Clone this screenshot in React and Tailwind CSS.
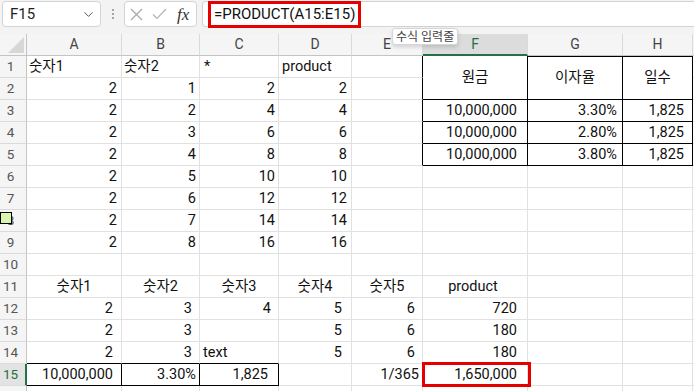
import { ChevronDown } from 'lucide-react'

const COLS = ['A', 'B', 'C', 'D', 'E', 'F', 'G', 'H', '']

const base = 'flex items-center whitespace-nowrap border-r border-b border-[#e1e1e1] text-[14.5px] text-[#111]'

// one entry per visible cell in flow order (merged cells skipped in row 2)
const rows = [
  [
    { t: '숫자1', c: 'pl-[2px]' },
    { t: '숫자2', c: 'pl-[2px]' },
    { t: '*', c: 'pl-[4px]' },
    { t: 'product', c: 'pl-[3px]' },
    { c: 'border-r-black' },
    { t: '원금', c: 'row-span-2 justify-center border-r-black border-b-black' },
    { t: '이자율', c: 'row-span-2 justify-center border-t border-r-black border-b-black border-t-black' },
    { t: '일수', c: 'row-span-2 justify-center border-t border-r-black border-b-black border-t-black' },
    {},
  ],
  [
    { t: '2', c: 'justify-end pr-[4px]' },
    { t: '1', c: 'justify-end pr-[3px]' },
    { t: '2', c: 'justify-end pr-[3px]' },
    { t: '2', c: 'justify-end pr-[4px]' },
    { c: 'border-r-black' },
    {},
  ],
]

const rates = ['3.30%', '2.80%', '3.80%']

for (let i = 2; i <= 8; i++) {
  const r = [
    { t: '2', c: 'justify-end pr-[4px]' },
    { t: String(i), c: 'justify-end pr-[3px]' },
    { t: String(i * 2), c: 'justify-end pr-[3px]' },
    { t: String(i * 2), c: 'justify-end pr-[4px]' },
  ]
  if (i <= 4) {
    r.push({ c: 'border-r-black' })
    r.push({ t: '10,000,000', c: 'justify-end pr-[10px] border-r-black border-b-black' })
    r.push({ t: rates[i - 2], c: 'justify-end pr-[5px] border-r-black border-b-black' })
    r.push({ t: '1,825', c: 'justify-end pr-[8px] border-r-black border-b-black' })
    r.push({})
  } else {
    for (let k = 0; k < 5; k++) r.push({})
  }
  rows.push(r)
}

rows.push([{}, {}, {}, {}, {}, {}, {}, {}, {}])

rows.push([
  { t: '숫자1', c: 'justify-center' },
  { t: '숫자2', c: 'justify-center' },
  { t: '숫자3', c: 'justify-center' },
  { t: '숫자4', c: 'justify-center' },
  { t: '숫자5', c: 'justify-center' },
  { t: 'product', c: 'justify-center pr-[4px]' },
  {}, {}, {},
])

rows.push([
  { t: '2', c: 'justify-end pr-[8px]' },
  { t: '3', c: 'justify-end pr-[7px]' },
  { t: '4', c: 'justify-end pr-[7px]' },
  { t: '5', c: 'justify-end pr-[9px]' },
  { t: '6', c: 'justify-end pr-[7px]' },
  { t: '720', c: 'justify-end pr-[10px]' },
  {}, {}, {},
])

rows.push([
  { t: '2', c: 'justify-end pr-[8px]' },
  { t: '3', c: 'justify-end pr-[7px]' },
  {},
  { t: '5', c: 'justify-end pr-[9px]' },
  { t: '6', c: 'justify-end pr-[7px]' },
  { t: '180', c: 'justify-end pr-[10px]' },
  {}, {}, {},
])

rows.push([
  { t: '2', c: 'justify-end pr-[8px] border-b-black' },
  { t: '3', c: 'justify-end pr-[7px] border-b-black' },
  { t: 'text', c: 'pl-[3px] border-b-black' },
  { t: '5', c: 'justify-end pr-[9px]' },
  { t: '6', c: 'justify-end pr-[7px]' },
  { t: '180', c: 'justify-end pr-[10px]' },
  {}, {}, {},
])

rows.push([
  { t: '10,000,000', c: 'justify-end pr-[8px] border-r-black border-b-black' },
  { t: '3.30%', c: 'justify-end pr-[3px] border-r-black border-b-black' },
  { t: '1,825', c: 'justify-end pr-[10px] border-r-black border-b-black' },
  {},
  { t: '1/365', c: 'justify-end pr-[3px]' },
  { t: '1,650,000', c: 'relative justify-end pr-[10px]', sel: true },
  {}, {}, {},
])

rows.push([{}, {}, {}, {}, {}, {}, {}, {}, {}])

function RowHead({ n }) {
  if (n === 15) {
    return (
      <div className="flex items-center justify-center border-r-2 border-b border-r-[#217346] border-b-[#dadada] bg-[#e3e3e3] pr-[4px] text-[13.5px] text-[#1e6e42]">
        {n}
      </div>
    )
  }
  return (
    <div className="flex items-center justify-center border-r border-b border-r-[#c4c4c4] border-b-[#dadada] bg-[#f5f5f5] pr-[5px] text-[13.5px] text-[#555]">
      {n < 16 ? n : ''}
    </div>
  )
}

export default function App() {
  return (
    <div className="relative h-[391px] w-[694px] overflow-hidden bg-white font-['Roboto','Noto_Sans_CJK_KR',sans-serif]">
      {/* formula bar */}
      <div className="flex h-[34px] items-start bg-[#f3f3f3] pt-[1px] pl-[2px]">
        <div className="flex h-[26px] w-[99px] items-center justify-between rounded-[4px] border border-[#d4d4d4] bg-white pl-[7px] pr-[4px]">
          <span className="text-[15px] text-[#1f1f1f]">F15</span>
          <ChevronDown size={15} strokeWidth={1.6} className="text-[#555]" />
        </div>
        <div className="flex h-[26px] w-[23px] flex-col items-center justify-center gap-[2px]">
          <span className="h-[2px] w-[2px] rounded-full bg-[#8a8a8a]" />
          <span className="h-[2px] w-[2px] rounded-full bg-[#8a8a8a]" />
          <span className="h-[2px] w-[2px] rounded-full bg-[#8a8a8a]" />
        </div>
        <div className="flex h-[26px] w-[73px] items-center rounded-[4px] border border-[#d4d4d4] bg-white pl-[5px]">
          <svg width="13" height="13" viewBox="0 0 13 13" fill="none" stroke="#a8a8a8" strokeWidth="1.2">
            <path d="M1 1L12 12M12 1L1 12" />
          </svg>
          <svg width="15" height="12" viewBox="0 0 15 12" fill="none" stroke="#b4b4b4" strokeWidth="1.2" className="ml-[9px]">
            <path d="M1 6.5L5 10.5L14 1" />
          </svg>
          <span className="ml-[10px] font-['Liberation_Serif',serif] text-[17px] italic leading-none text-[#333]">fx</span>
        </div>
        <div className="ml-[5px] flex h-[26px] flex-1 items-start rounded-l-[4px] border border-r-0 border-[#d4d4d4] bg-white pl-[5px]">
          <div className="-mt-[1px] flex h-[27px] items-center border-[3px] border-[#e60000] px-[3px] text-[15px] text-[#111]">
            =PRODUCT(A15:E15)
          </div>
        </div>
      </div>

      {/* sheet */}
      <div className="grid auto-rows-[22px] grid-cols-[27px_95px_78px_79px_73px_71px_105px_95px_70px_60px]">
        <div className="flex items-end justify-end border-r border-b border-[#c4c4c4] bg-[#f5f5f5] p-[2px]">
          <svg width="16" height="16" viewBox="0 0 16 16">
            <polygon points="16,0 16,16 0,16" fill="#d7d7d7" />
          </svg>
        </div>
        {COLS.map((c, k) =>
          c === 'F' ? (
            <div key={k} className="flex items-center justify-center border-r border-b-2 border-r-[#dadada] border-b-[#217346] bg-[#dcdcdc] text-[14px] text-[#1e6e42]">
              {c}
            </div>
          ) : (
            <div key={k} className="flex items-center justify-center border-r border-b border-r-[#dadada] border-b-[#c4c4c4] bg-[#f5f5f5] text-[14px] text-[#444]">
              {c}
            </div>
          )
        )}
        {rows.map((r, i) => [
          <RowHead key={'h' + i} n={i + 1} />,
          ...r.map((cell, j) => (
            <div key={i + '-' + j} className={base + ' ' + (cell.c || '')}>
              {cell.t}
              {cell.sel && (
                <div className="absolute -top-[2px] -right-[4px] -bottom-[2px] -left-[1px] border-[3px] border-[#e60000]" />
              )}
            </div>
          )),
        ])}
      </div>

      {/* tooltip */}
      <div className="absolute left-[392px] top-[28px] flex h-[17px] items-center rounded-[3px] border border-[#d6d6d6] bg-white px-[3px] text-[12px] text-[#444] shadow-[0_2px_4px_rgba(0,0,0,0.15)]">
        수식 입력줄
      </div>

      {/* marker */}
      <div className="absolute left-0 top-[212px] h-[12px] w-[12px] border border-black bg-[#d9f5b0]" />
    </div>
  )
}
